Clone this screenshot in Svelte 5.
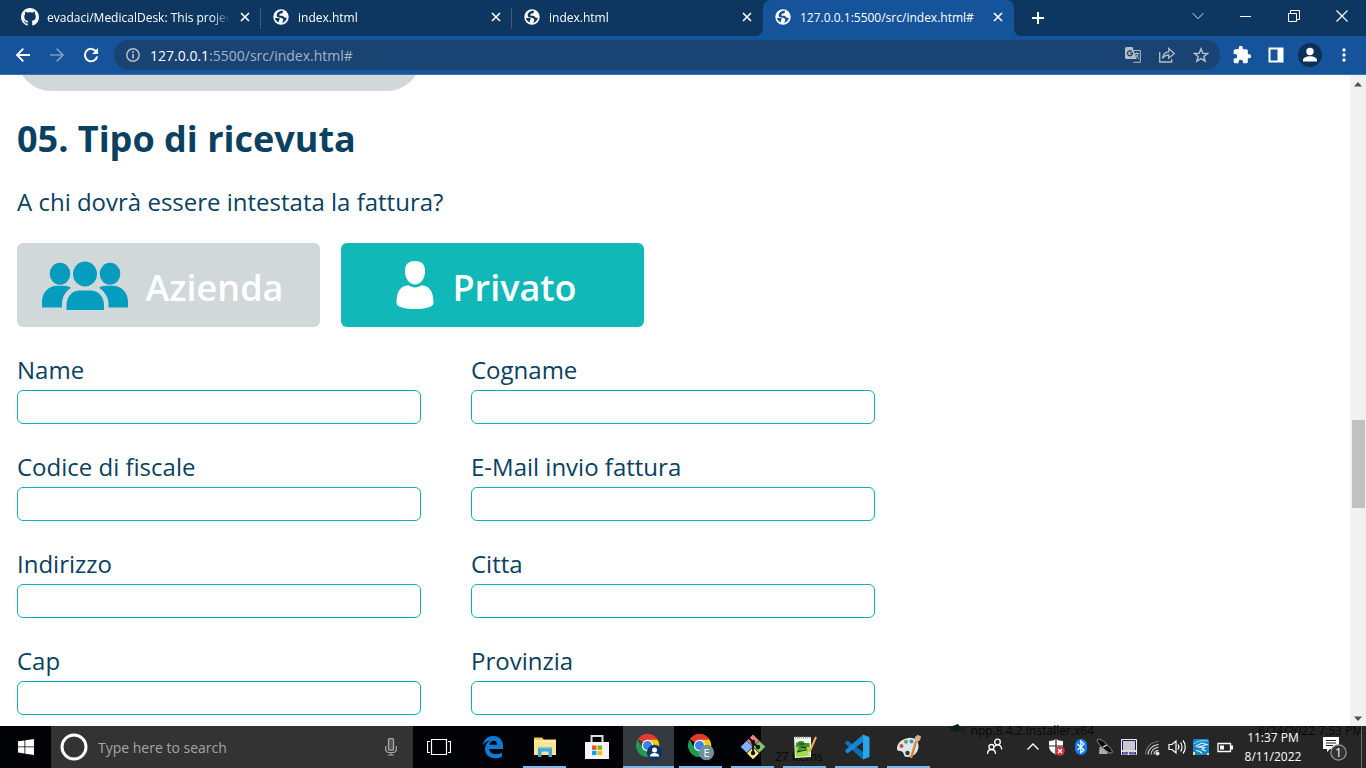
<script>
  const tabs = [
    { title: 'evadaci/MedicalDesk: This project', icon: 'github', active: false },
    { title: 'index.html', icon: 'globe', active: false },
    { title: 'index.html', icon: 'globe', active: false },
    { title: '127.0.0.1:5500/src/index.html#', icon: 'globe', active: true }
  ];
  const fields = [
    ['name', 'Name'],
    ['cognome', 'Cogname'],
    ['codice', 'Codice di fiscale'],
    ['email', 'E-Mail invio fattura'],
    ['indirizzo', 'Indirizzo'],
    ['citta', 'Citta'],
    ['cap', 'Cap'],
    ['provincia', 'Provinzia']
  ];
  let receipt = $state('privato');
</script>

<div class="screen">
  <header class="browser">
    <div class="strip">
      <div class="tabs">
        {#each tabs as tab}
          <div class="tab" class:active={tab.active}>
            {#if tab.icon === 'github'}
              <svg width="18" height="18" viewBox="0 0 16 16" fill="#fff"><path d="M8 0C3.58 0 0 3.58 0 8c0 3.54 2.29 6.53 5.47 7.59.4.07.55-.17.55-.38 0-.19-.01-.82-.01-1.49-2.01.37-2.53-.49-2.69-.94-.09-.23-.48-.94-.82-1.13-.28-.15-.68-.52-.01-.53.63-.01 1.08.58 1.23.82.72 1.21 1.87.87 2.33.66.07-.52.28-.87.51-1.07-1.78-.2-3.64-.89-3.64-3.95 0-.87.31-1.59.82-2.15-.08-.2-.36-1.02.08-2.12 0 0 .67-.21 2.2.82.64-.18 1.32-.27 2-.27s1.36.09 2 .27c1.53-1.04 2.2-.82 2.2-.82.44 1.1.16 1.92.08 2.12.51.56.82 1.27.82 2.15 0 3.07-1.87 3.75-3.65 3.95.29.25.54.73.54 1.48 0 1.07-.01 1.93-.01 2.2 0 .21.15.46.55.38A8.01 8.01 0 0 0 16 8c0-4.42-3.58-8-8-8z" /></svg>
            {:else}
              <svg width="18" height="18" viewBox="0 0 18 18"><circle cx="9" cy="9" r="7.700" fill="#fff" /><path d="M11.300 2.800L10.300 5.200 7.800 5.800 7.200 7.600c2.300.2 4.300.2 4.800 1.500.5 1.200 2 .4 2.900.7-.4 2.600-2.500 4.700-5.300 5.100.5-1.200 1.800-1.400 1.600-3-.1-1.500-1.200-2-2.600-2.100-2.200-.2-4-.7-4-2.600 0-1.900 2-3.800 4.400-4.400z" fill={tab.active ? '#15539a' : '#0d3661'} /><path d="M3 10h3.300c1.600 0 2 1.400.8 2l-.5 2.400C4.500 13.500 3.200 12 3 10z" fill={tab.active ? '#15539a' : '#0d3661'} /></svg>
            {/if}
            <span class="title">{tab.title}</span>
            <button class="close" aria-label="Chiudi scheda">
              <svg width="10" height="10" viewBox="0 0 10 10" stroke="#fff" stroke-width="1.6"><path d="M1 1l8 8M9 1L1 9" /></svg>
            </button>
          </div>
        {/each}
        <button class="newtab" aria-label="Nuova scheda">
          <svg width="14" height="14" viewBox="0 0 14 14" stroke="#fff" stroke-width="2"><path d="M7 1v12M1 7h12" /></svg>
        </button>
      </div>
      <div class="wincontrols">
        <button aria-label="Cerca schede"><svg width="12" height="12" viewBox="0 0 12 12" fill="none" stroke="#d5dfe9"><path d="M.7 3.200L6 8.700l5.300-5.500" /></svg></button>
        <button aria-label="Riduci"><svg width="12" height="12" viewBox="0 0 12 12" stroke="#fff"><path d="M0 6.500h11" /></svg></button>
        <button aria-label="Ripristina"><svg width="12" height="12" viewBox="0 0 12 12" fill="none" stroke="#fff"><path d="M.5 3.500h8v8h-8zM2.500 3V.5h9v9H9" /></svg></button>
        <button aria-label="Chiudi"><svg width="12" height="12" viewBox="0 0 12 12" stroke="#fff" stroke-width="1.200"><path d="M.5.5l11 11M11.500.5l-11 11" /></svg></button>
      </div>
    </div>

    <div class="toolbar">
      <button class="tool" aria-label="Indietro"><svg width="16" height="16" viewBox="0 0 16 16" fill="none" stroke="#fff" stroke-width="1.900"><path d="M15 8H2.500M8.300 1.700L2 8l6.300 6.300" /></svg></button>
      <button class="tool" aria-label="Avanti"><svg width="16" height="16" viewBox="0 0 16 16" fill="none" stroke="#7a9cc6" stroke-width="1.700"><path d="M1 8h12.500M7.700 1.700L14 8l-6.300 6.300" /></svg></button>
      <button class="tool" aria-label="Ricarica"><svg width="16" height="16" viewBox="0 0 16 16"><path d="M13.300 4.600A6.200 6.200 0 1 0 14.200 9.500" fill="none" stroke="#fff" stroke-width="2" /><path d="M15 1v6H9z" fill="#fff" /></svg></button>
      <div class="omnibox">
        <svg width="16" height="16" viewBox="0 0 16 16" fill="none" stroke="#b5bdc8" stroke-width="1.500"><circle cx="8" cy="8" r="6.200" /><path d="M8 7v4.500M8 4.300v1.600" stroke-width="1.700" /></svg>
        <span class="url">127.0.0.1<span>:5500/src/index.html#</span></span>
        <button class="tool" aria-label="Traduci"><svg width="16" height="16" viewBox="0 0 16 16"><path d="M7 3.500h8.300v11.800H8.500" fill="none" stroke="#b5bdc8" /><path d="M1.500 0h6l1.200 3.500 3 8.500H1.500A1.500 1.500 0 0 1 0 10.500v-9A1.500 1.500 0 0 1 1.500 0z" fill="#b5bdc8" /><path d="M6.700 4.400A2.500 2.500 0 1 0 7.500 6.200H5" fill="none" stroke="#184373" stroke-width="1.300" /><path d="M9.500 6.500h4.500M11.700 5.300v1.200M13.200 6.700c-.4 2-1.500 3.300-2.600 4.200M10.500 7.500l3.500 4.500" fill="none" stroke="#b5bdc8" /></svg></button>
        <button class="tool" aria-label="Condividi"><svg width="16" height="16" viewBox="0 0 16 16" fill="none" stroke="#b5bdc8" stroke-width="1.300"><path d="M.7 5v10h12V12M3.500 11.500c.4-4 2.500-6.500 6.200-6.700V1.500L15.300 6.500l-5.600 4.700V8c-3 .1-4.800 1.200-6.200 3.500z" /></svg></button>
        <button class="tool" aria-label="Preferiti"><svg width="16" height="16" viewBox="0 0 16 16" fill="none" stroke="#b5bdc8" stroke-width="1.500"><path d="M8 1.800l1.800 4.400 4.700.3-3.600 3 1.200 4.700L8 11.600l-4.100 2.600 1.200-4.700-3.600-3 4.700-.3z" /></svg></button>
      </div>
      <button class="tool" aria-label="Estensioni"><svg width="20" height="20" viewBox="0 0 24 24" fill="#fff"><path d="M20.500 11H19V7a2 2 0 0 0-2-2h-4V3.500a2.500 2.500 0 0 0-5 0V5H4a2 2 0 0 0-2 2v3.800h1.500a2.700 2.700 0 0 1 0 5.400H2V20a2 2 0 0 0 2 2h3.800v-1.500a2.700 2.700 0 0 1 5.400 0V22H17a2 2 0 0 0 2-2v-4h1.500a2.500 2.500 0 0 0 0-5z" /></svg></button>
      <button class="tool" aria-label="Pannello laterale"><svg width="16" height="16" viewBox="0 0 16 16"><path fill="#fff" fill-rule="evenodd" d="M.5.500h15v15H.5zM2.500 2.500v11h7v-11z" /></svg></button>
      <button class="tool" aria-label="Profilo"><svg width="24" height="24" viewBox="0 0 24 24"><circle cx="12" cy="12" r="12" fill="#0d3057" /><circle cx="12" cy="8.500" r="3.700" fill="#fff" /><path d="M5 18.500v-1.700c0-2 4-3.600 7-3.600s7 1.600 7 3.600v1.700z" fill="#fff" /></svg></button>
      <button class="tool" aria-label="Menu"><svg width="4" height="16" viewBox="0 0 4 16" fill="#fff"><circle cx="2" cy="3" r="1.700" /><circle cx="2" cy="8" r="1.700" /><circle cx="2" cy="13" r="1.700" /></svg></button>
    </div>
  </header>

  <div class="viewport">
    <main>
      <div class="previous"><div class="pill"></div></div>
      <h1>05. Tipo di ricevuta</h1>
      <p>A chi dovrà essere intestata la fattura?</p>
      <div class="choices">
        <button class="choice" class:selected={receipt === 'azienda'} onclick={() => (receipt = 'azienda')}>
          <svg width="86" height="50" viewBox="0 -1 86 50" fill="#049dbf"><ellipse cx="18" cy="12.700" rx="10.300" ry="11" /><ellipse cx="68" cy="12.700" rx="10.300" ry="11" /><ellipse cx="43" cy="13" rx="12" ry="12.500" /><path d="M0 46.500V41c0-10 7-16.300 15-16.300h7c3 0 5 .7 7 2-6 4-9 10-9 16v3.800zM86 46.500V41c0-10-7-16.300-15-16.300h-7c-3 0-5 .7-7 2 6 4 9.500 10 9.500 16v3.800z" /><path d="M24.500 49V44c0-8.500 6-14.500 13-14.500h11c7.500 0 13.500 6 13.500 14.500v5z" /></svg>
          <span>Azienda</span>
        </button>
        <button class="choice" class:selected={receipt === 'privato'} onclick={() => (receipt = 'privato')}>
          <svg width="38" height="50" viewBox="0 0 38 50" fill="#fff"><path d="M19 1c7 0 10 3.500 10 10.500C29 18.500 24.500 24.500 19 24.500S9 18.500 9 11.500C9 4.500 12 1 19 1z" /><path d="M12.500 25.300c4.200 2.800 8.800 2.800 13 0C33 26 37.500 30.500 37.500 43c0 4-9 6-18.500 6S.5 47 .5 43C.5 30.500 5 26 12.500 25.300z" /></svg>
          <span>Privato</span>
        </button>
      </div>
      <form>
        {#each fields as [id, label]}
          <div class="field">
            <label for={id}>{label}</label>
            <input {id} type="text" />
          </div>
        {/each}
      </form>
    </main>
    <div class="scrollbar">
      <svg width="8" height="5" viewBox="0 0 8 5" fill="#505050"><path d="M0 4.500L4 0l4 4.500z" /></svg>
      <div class="track"><div class="thumb"></div></div>
      <svg width="8" height="5" viewBox="0 0 8 5" fill="#505050"><path d="M0 .5L4 5 8 .5z" /></svg>
    </div>
  </div>

  <footer class="taskbar">
    <div class="ghost items">27 items</div>
    <div class="ghost file"><svg width="16" height="12" viewBox="0 0 16 12"><path d="M0 4l8-3 3 4-4 4-6-1z" fill="#0d1c16" /><path d="M9 4h6v4l-3 3-3-3z" fill="#17221f" /></svg>npp.8.4.2.Installer.x64</div>
    <div class="ghost date">6/24/2022 7:53 PM</div>

    <button class="start" aria-label="Start"><svg width="16" height="16" viewBox="0 0 16 16" fill="#fff"><path d="M0 2.300l6.500-.9v6.100H0zM7.300 1.300L16 0v7.500H7.300zM0 8.300h6.500v6.100L0 13.500zM7.300 8.300H16V16l-8.700-1.300z" /></svg></button>
    <div class="search">
      <svg width="28" height="28" viewBox="0 0 28 28"><circle cx="14" cy="14" r="12" fill="none" stroke="#fff" stroke-width="3" /></svg>
      <input type="text" placeholder="Type here to search" aria-label="Type here to search" />
      <svg width="12" height="18" viewBox="0 0 12 18" fill="none" stroke="#a5a5a5"><rect x="3.500" y=".7" width="5" height="11.500" rx="1" fill="#555" stroke-width="1.300" /><path d="M.7 8v4.500l2 2h6.600l2-2V8M6 14.500V17M3 17h6" stroke-width="1.200" /></svg>
    </div>
    <div class="apps">
      <button class="app" aria-label="Task View"><svg width="24" height="18" viewBox="0 0 24 18" fill="none" stroke="#fff"><path d="M4.500 1.500h15v15h-15zM3 3.500H.5v11H3M21 3.500h2.500v11H21" stroke-width="1.200" /></svg></button>
      <button class="app" aria-label="Edge"><svg width="22" height="24" viewBox="0 0 22 24"><path fill="#0b7bd7" d="M.8 10.500C1.800 4.200 5.800 1 11.300 1 17.500 1 21 5.500 21 10.500V14H7.300c.2 3.700 3.400 5 6.700 5 2.500 0 4.500-.7 6-1.600v4.300c-2 1.100-4.400 1.600-7 1.600-6 0-10-3.700-10-9.500 0-3.600 2-6.600 5.200-8.200C4.500 6 2.200 8 .8 10.500zM7.500 9.800h7.700c0-2.600-1.300-4.100-3.700-4.100-2.200 0-3.700 1.700-4 4.100z" /></svg></button>
      <button class="app open" aria-label="File Explorer"><svg width="24" height="22" viewBox="0 0 24 22"><path fill="#f1c452" d="M1 1.500h8l2 2.500H1z" /><path fill="#ffe48c" d="M1 3.500h22V19H1z" /><path fill="#fff5cc" d="M1 5h22v1H1z" /><path fill="#3fa7dc" d="M5 11h14v10h-3.500v-5.500h-7V21H5z" /><path fill="#77cbee" d="M5 11h14v1.500H5z" /></svg></button>
      <button class="app" aria-label="Store"><svg width="26" height="26" viewBox="0 0 26 26"><path d="M7.500 9V2h11v7" fill="none" stroke="#ddd" stroke-width="2" /><path fill="#f4f4f4" d="M1 8h24v17H1z" /><path fill="#f25022" d="M8 11.500h4.500v4.300H8z" /><path fill="#7fba00" d="M13.500 11.500H18v4.300h-4.500z" /><path fill="#00a4ef" d="M8 16.800h4.500v4.300H8z" /><path fill="#ffb900" d="M13.500 16.800H18v4.300h-4.500z" /></svg></button>
      {#each [true, false] as current}
        <button class="app open" class:current aria-label="Google Chrome">
          <svg width="28" height="28" viewBox="0 0 28 28"><path fill="#e33b2e" d="M12.500 12L2.800 6.300A11.500 11.500 0 0 1 22.500 6.500z" /><path fill="#e33b2e" d="M12.500 1a11.500 11.500 0 0 1 10 5.800H12.500z" /><path fill="#ffcb05" d="M12.500 6.800h10.100A11.500 11.500 0 0 1 12.500 24l5-8.600z" /><path fill="#219b50" d="M12.500 24A11.500 11.500 0 0 1 2.600 6.600l5 8.700 7.500 2.400z" /><circle cx="12.500" cy="12.500" r="5.700" fill="#fff" /><circle cx="12.500" cy="12.500" r="4.500" fill="#3c7ff0" />
            {#if current}
              <circle cx="19.500" cy="19.500" r="7.700" fill="#0d3566" /><circle cx="19.500" cy="17" r="2.500" fill="#fff" /><path fill="#fff" d="M15 23.500v-1c0-1.500 2.500-2.400 4.500-2.400s4.500.9 4.500 2.400v1z" />
            {:else}
              <circle cx="19.500" cy="19.500" r="7.700" fill="#72909c" /><text x="19.500" y="23.500" text-anchor="middle" fill="#fff" font-size="11">E</text>
            {/if}
          </svg>
        </button>
      {/each}
      <button class="app open" aria-label="Git"><svg width="26" height="26" viewBox="0 0 26 26"><path fill="#f08080" d="M13 .5l6 6-6 6-6-6z" /><path fill="#80b3ff" d="M6.700 6.800l6 6-6 6-6-6z" /><path fill="#7dc863" d="M19.300 6.800l6 6-6 6-6-6z" /><path fill="#ffe680" d="M13 13.200l6 6-6 6-6-6z" /><path d="M9 4l4 4v11M13 9l5 4" fill="none" stroke="#111" stroke-width="1.800" /><circle cx="13" cy="8" r="2.200" fill="#111" /><circle cx="13" cy="19" r="2.200" fill="#111" /><circle cx="18" cy="13" r="2.200" fill="#111" /></svg></button>
      <button class="app open" aria-label="Notepad++"><svg width="26" height="26" viewBox="0 0 26 26"><path fill="#f4f7ef" d="M2 3h17v20l-16 1z" /><path d="M3 3.500h15" stroke="#999" stroke-width="2" stroke-dasharray="1 1" /><path fill="#a1db4a" d="M3 12l15-2v12l-14 1z" /><path fill="#41932a" d="M4 9.500c2-3 7-3.500 9-.5h4.500v4h-3l1 4h-2.500l-2.500-2.500-2.500 3H5l2-4-3-1z" /><path d="M7 10h5M9 13l5 .5M5 18l8-2" stroke="#142c10" stroke-width="1.200" /><path d="M24 3L17 19" stroke="#f3b34c" stroke-width="2" /><path d="M17.500 17.500L16.500 21" stroke="#ddd" stroke-width="1.500" /></svg></button>
      <button class="app open" aria-label="Visual Studio Code"><svg width="26" height="26" viewBox="0 0 26 26"><path fill="#0b70b8" d="M1 8.500l2.500-2L19 18v7.500L1.500 10z" /><path fill="#1686d0" d="M1 17.500l2.500 2L19 8V.5L1.500 16z" /><path fill="#2ba4ea" d="M19 .5L25.500 3v20L19 25.500z" /></svg></button>
      <button class="app open" aria-label="Paint"><svg width="26" height="26" viewBox="0 0 26 26"><path fill="#dbe6ed" d="M12.500 4C19 3 23 7 22.500 13S17 23.500 11 23c-4-.4-2.500-4-5-5.500-2-1-5 .5-5-3C1 9 6 5 12.500 4z" /><circle cx="5.500" cy="12" r="2" fill="#e74436" /><circle cx="10" cy="7.800" r="2" fill="#52b14a" /><circle cx="15.500" cy="7.500" r="2" fill="#418fd0" /><circle cx="11.500" cy="19" r="2.200" fill="#333" /><path d="M20.500 6L15 24" stroke="#d9823b" stroke-width="2.400" /><path fill="#d5b182" d="M19 6.500c-1-2.500.5-5 3-5.500l3 1.500c0 2.500-1.500 5-4 5.500z" /></svg></button>
    </div>
    <div class="tray">
      <svg class="people" width="18" height="18" viewBox="0 0 18 18" fill="none" stroke="#fff" stroke-width="1.300"><circle cx="11.500" cy="4" r="2.800" /><path d="M8.300 9c1-1.800 2-2.200 3.200-2.200 2.500 0 4 2 4.200 4.700" /><circle cx="5.500" cy="9" r="2.500" /><path d="M1.500 16c0-3 1.500-4.500 4-4.500s4 1.500 4 4.500" /></svg>
      <svg width="24" height="16" viewBox="0 0 24 16" fill="none" stroke="#fff" stroke-width="1.400"><path d="M6.500 10.500L12 5l5.500 5.500" /></svg>
      <svg width="24" height="18" viewBox="0 0 24 18"><path fill="#fff" d="M4 3c3 0 5-.8 7-2 2 1.200 4 2 7 2v5c0 4-3 7-7 8.500C7 15 4 12 4 8z" /><path d="M11 1v15M4 8h14" stroke="#262626" stroke-width="1.200" /><circle cx="15" cy="13" r="4.800" fill="#d13438" /><path d="M13 11l4 4M17 11l-4 4" stroke="#fff" stroke-width="1.300" /></svg>
      <svg width="24" height="18" viewBox="0 0 24 18"><rect x="6" y="1" width="12" height="16" rx="6" fill="#0a7ff0" /><path d="M8.500 6l6.500 6-3.200 2.800V3L15 6l-6.500 6" fill="none" stroke="#fff" stroke-width="1.200" /></svg>
      <svg width="24" height="18" viewBox="0 0 24 18"><path fill="#aaa" d="M6.500 9L6 16h9l-1-2.500L9 8z" /><path fill="#0c0c0c" stroke="#999" stroke-width=".9" d="M4.500 1.500c1.500-1 5 .5 8.500 4s7 7.500 6.300 9-5.300-.5-9-4-7.300-8-5.800-9z" /><path d="M10 9l4-2" stroke="#eee" stroke-width="1.300" /></svg>
      <svg width="24" height="18" viewBox="0 0 24 18"><path fill="#c8c8c8" stroke="#eee" d="M4.500 1.500h15v15h-15z" /><path d="M5.500 12V2.500h13V12" fill="none" stroke="#16197c" /><path d="M4 12.500h16v1H4z" fill="#eee" /><path d="M5 14h5.500v2.500H5zM12.500 14H19v2.500h-6.500z" fill="#16197c" /><path d="M6 15h3.500M13.500 15H18" stroke="#ccc" /></svg>
      <svg width="24" height="18" viewBox="0 0 24 18" fill="none" stroke="#ddd" stroke-width="1.100"><path d="M7 16.500c0-5 4.500-9.500 10.500-10M10 16.500c0-4 3.500-7 7.500-7.300M13 16.500c0-2.500 2-4 4.500-4.300" /><path d="M4.500 16.500C5 9 10 4 17.500 3.500" stroke="#777" /><circle cx="16.500" cy="15.500" r="1.500" fill="#fff" /></svg>
      <svg width="24" height="18" viewBox="0 0 24 18" fill="none" stroke="#fff" stroke-width="1.200"><path d="M4 6.500h3L11 3v12l-4-3.500H4zM13 6.500c1 1.500 1 3.500 0 5M15.500 4.500c2 2.500 2 6.500 0 9M18 2.500c3 3.500 3 9.500 0 13" /></svg>
      <svg width="24" height="18" viewBox="0 0 24 18"><rect x="4" y="1" width="16" height="16" rx="1.500" fill="#1685c7" /><path d="M4.500 6c4-3 8-4.500 14-3" fill="none" stroke="#58c3ee" stroke-width="1.300" /><path d="M6.500 8.500l6-3.500 5.500 1.500-5 1.500-4.500 1 7 .5-2.500 2 4 1.500M7 12.500l4 1 2 2" fill="none" stroke="#d8f3ff" stroke-width="1.100" /><path fill="#ffe34d" d="M4 14h2v3H4zM18 15h2v2h-2z" /></svg>
      <svg width="24" height="18" viewBox="0 0 24 18"><path d="M5 5.500h12.500v8H5z" fill="none" stroke="#fff" stroke-width="1.300" /><path d="M7 7.500h4v4H7zM18 7.500h2v4h-2z" fill="#fff" /></svg>
      <div class="clock"><span>11:37 PM</span><span>8/11/2022</span></div>
      <svg class="notice" width="26" height="26" viewBox="0 0 26 26"><path fill="#fff" d="M1 1h16v12H8l-3 3v-3H1z" /><path d="M4 4.500h10M4 7h10M4 9.500h7" stroke="#262626" /><circle cx="16.500" cy="16.500" r="7.700" fill="#333" stroke="#999" stroke-width="1.200" /><text x="16.500" y="21" text-anchor="middle" fill="#fff" font-size="12">1</text></svg>
    </div>
  </footer>
</div>

<style>
  :global(body) {
    margin: 0;
  }
  .screen {
    height: 100vh;
    display: flex;
    flex-direction: column;
    overflow: hidden;
    background: #fff;
    font-family: 'Open Sans', 'Noto Sans', sans-serif;
  }
  button {
    border: 0;
    padding: 0;
    background: none;
    font: inherit;
    display: flex;
    align-items: center;
    justify-content: center;
  }
  svg {
    flex: none;
    display: block;
  }

  .browser {
    background: #15539a;
    border-bottom: 1px solid #3d71ad;
  }
  .strip {
    height: 36px;
    display: flex;
    justify-content: space-between;
    background: #0d3661;
  }
  .tabs {
    display: flex;
    flex: 1;
    min-width: 0;
    padding-left: 10px;
  }
  .tab {
    position: relative;
    box-sizing: border-box;
    flex: 0 1 251px;
    min-width: 0;
    display: flex;
    align-items: center;
    gap: 8px;
    padding: 0 9px 2px 11px;
    color: #fff;
    font-size: 12px;
  }
  .tab:not(.active):not(:nth-child(3))::after {
    content: '';
    position: absolute;
    right: 0;
    top: 8px;
    width: 1px;
    height: 21px;
    background: #3f5d80;
  }
  .tab.active {
    background: #15539a;
    border-radius: 8px 8px 0 0;
  }
  .tab.active::before,
  .tab.active::after {
    content: '';
    position: absolute;
    bottom: 0;
    width: 8px;
    height: 8px;
  }
  .tab.active::before {
    left: -8px;
    background: radial-gradient(circle at 0 0, #0d3661 8px, #15539a 8px);
  }
  .tab.active::after {
    right: -8px;
    background: radial-gradient(circle at 100% 0, #0d3661 8px, #15539a 8px);
  }
  .title {
    flex: 1;
    min-width: 0;
    overflow: hidden;
    white-space: nowrap;
  }
  .tab:not(.active) .title {
    mask-image: linear-gradient(to right, #000 90%, transparent);
  }
  .close {
    width: 14px;
    height: 16px;
  }
  .newtab {
    width: 48px;
    padding-bottom: 1px;
  }
  .wincontrols {
    display: flex;
  }
  .wincontrols button {
    width: 48px;
    padding-bottom: 5px;
  }
  .toolbar {
    height: 38px;
    display: flex;
    align-items: center;
    padding: 0 5px 0 6px;
  }
  .tool {
    width: 34px;
    height: 30px;
    flex: none;
  }
  .omnibox {
    flex: 1;
    min-width: 0;
    height: 30px;
    margin: 0 5px 0 6px;
    padding: 0 2px 0 11px;
    box-sizing: border-box;
    border-radius: 15px;
    background: #184373;
    display: flex;
    align-items: center;
  }
  .url {
    flex: 1;
    min-width: 0;
    margin-left: 9px;
    color: #fff;
    font-size: 14px;
    white-space: nowrap;
    overflow: hidden;
  }
  .url span {
    color: #a3b4c7;
  }

  .viewport {
    flex: 1;
    min-height: 0;
    display: flex;
  }
  main {
    flex: 1;
    min-width: 0;
    overflow: hidden;
    padding: 0 17px;
    color: #0a4160;
  }
  .previous {
    height: 16px;
    max-width: 404px;
    display: flex;
    align-items: flex-end;
    overflow: hidden;
  }
  .pill {
    flex: 1;
    height: 68px;
    border-radius: 34px;
    background: #d0d8da;
  }
  h1 {
    margin: 22px 0 0;
    font-size: 36px;
    line-height: 52px;
    font-weight: 700;
  }
  p {
    margin: 19px 0 0;
    font-size: 24px;
    line-height: 36px;
  }
  .choices {
    display: flex;
    gap: 21px;
    margin-top: 23px;
  }
  .choice {
    box-sizing: border-box;
    width: 303px;
    height: 84px;
    padding-right: 12px;
    border-radius: 6px;
    background: #d0d8da;
    color: #fff;
    font-size: 36px;
    font-weight: 600;
    gap: 18px;
  }
  .choice span {
    padding-top: 4px;
  }
  .choice.selected {
    background: #10b8b8;
  }
  form {
    display: grid;
    grid-template-columns: repeat(auto-fill, 404px);
    max-width: 860px;
    column-gap: 50px;
    row-gap: 27px;
    margin-top: 27px;
  }
  .field {
    display: flex;
    flex-direction: column;
  }
  label {
    font-size: 24px;
    line-height: 32px;
    height: 36px;
  }
  .field input {
    box-sizing: border-box;
    width: 100%;
    height: 34px;
    padding: 0 10px;
    border: 1px solid #10b0b0;
    border-radius: 6px;
    background: #fff;
    font: inherit;
  }
  .scrollbar {
    width: 16px;
    box-sizing: border-box;
    padding: 7px 0 5px;
    background: #f1f1f1;
    display: flex;
    flex-direction: column;
    align-items: center;
  }
  .track {
    flex: 1;
    align-self: stretch;
    padding: 0 1px 0 2px;
  }
  .track::before {
    content: '';
    display: block;
    height: 53%;
  }
  .thumb {
    height: 14%;
    background: #c1c1c1;
  }

  .taskbar {
    position: relative;
    z-index: 0;
    height: 42px;
    flex: none;
    display: flex;
    background: linear-gradient(to right, #010306 761px, #262626 761px);
    color: #fff;
  }
  .ghost {
    position: absolute;
    z-index: -1;
    color: #080808;
    font-size: 12px;
    line-height: 16px;
    white-space: nowrap;
    display: flex;
    gap: 5px;
  }
  .ghost.items {
    left: 775px;
    bottom: 3px;
  }
  .ghost.file {
    right: 272px;
    top: -3px;
  }
  .ghost.date {
    right: 3px;
    top: -3px;
  }
  .start {
    width: 51px;
  }
  .search {
    flex: 0 1 362px;
    min-width: 0;
    box-sizing: border-box;
    padding: 0 16px 0 9px;
    background: #333;
    display: flex;
    align-items: center;
    gap: 10px;
  }
  .search input {
    flex: 1;
    min-width: 0;
    border: 0;
    padding: 0;
    background: none;
    color: #fff;
    font: inherit;
    font-size: 14px;
  }
  .search input::placeholder {
    color: #a5a5a5;
    opacity: 1;
  }
  .apps {
    display: flex;
    gap: 1px;
  }
  .app {
    position: relative;
    width: 51px;
  }
  .app:first-child {
    margin-right: 2px;
  }
  .app.open::after {
    content: '';
    position: absolute;
    left: 4px;
    right: 4px;
    bottom: 0;
    height: 2px;
    background: #76b9ed;
  }
  .app.current {
    background: #343a3f;
  }
  .app.current::after {
    left: 0;
    right: 0;
  }
  .tray {
    margin-left: auto;
    display: flex;
    align-items: center;
    padding-right: 4px;
    border-right: 1px solid #6a6a6a;
    margin-right: 4px;
  }
  .people {
    margin-right: 17px;
  }
  .clock {
    width: 72px;
    display: flex;
    flex-direction: column;
    align-items: center;
    font-size: 12px;
    line-height: 19px;
  }
  .notice {
    margin: 4px 9px 0 13px;
  }
</style>
